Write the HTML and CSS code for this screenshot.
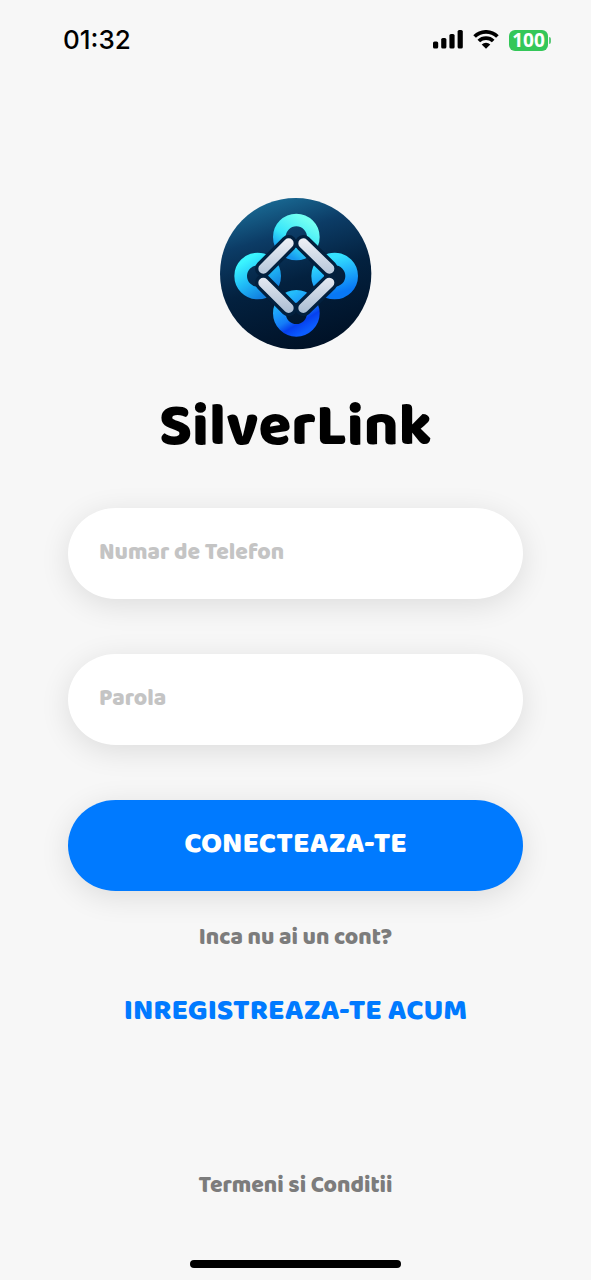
FILE: index.html
```html
<!DOCTYPE html>
<html lang="ro">
<head>
<meta charset="utf-8">
<meta name="viewport" content="width=device-width, initial-scale=1">
<title>SilverLink</title>
<link rel="stylesheet" href="styles.css">
</head>
<body>
<div class="screen">
  <header class="status">
    <time class="clock">01:32</time>
    <div class="indicators">
      <svg class="signal" viewBox="0 0 30 20" aria-hidden="true">
        <rect x="0" y="11.5" width="5.2" height="7" rx="1.6"/>
        <rect x="8.2" y="8" width="5.2" height="10.5" rx="1.6"/>
        <rect x="16.4" y="4" width="5.2" height="14.5" rx="1.6"/>
        <rect x="24.6" y="0" width="5.2" height="18.5" rx="1.6"/>
      </svg>
      <svg class="wifi" viewBox="0 0 26 20" aria-hidden="true">
        <path class="wave" d="M1.6 6.5a16.4 16.4 0 0 1 22.8 0M5.8 11a10.4 10.4 0 0 1 14.4 0"/>
        <path d="M13 18.8l-4.3-4.3a6.2 6.2 0 0 1 8.6 0z"/>
      </svg>
      <div class="battery"><span class="level">100</span><span class="tip"></span></div>
    </div>
  </header>

  <main class="login">
    <svg class="logo" viewBox="14 16 456 456" role="img" aria-label="SilverLink">
      <defs>
        <linearGradient id="disc" x1="0.3" y1="0" x2="0.6" y2="1">
          <stop offset="0" stop-color="#1a6c96"/>
          <stop offset="0.25" stop-color="#0c3c66"/>
          <stop offset="0.55" stop-color="#03213f"/>
          <stop offset="1" stop-color="#001126"/>
        </linearGradient>
        <linearGradient id="top" x1="0.2" y1="1" x2="0.8" y2="0">
          <stop offset="0" stop-color="#1699f0"/>
          <stop offset="0.4" stop-color="#35e4fa"/>
          <stop offset="1" stop-color="#72fff2"/>
        </linearGradient>
        <linearGradient id="left" x1="0.2" y1="0" x2="0.8" y2="1">
          <stop offset="0" stop-color="#3bf5ff"/>
          <stop offset="0.5" stop-color="#20bdf8"/>
          <stop offset="1" stop-color="#1280df"/>
        </linearGradient>
        <linearGradient id="right" x1="0.3" y1="0" x2="0.6" y2="1">
          <stop offset="0" stop-color="#35e2ff"/>
          <stop offset="1" stop-color="#0878f5"/>
        </linearGradient>
        <linearGradient id="bottom" x1="0.2" y1="0" x2="0.8" y2="1">
          <stop offset="0" stop-color="#24bdfb"/>
          <stop offset="0.55" stop-color="#147cf7"/>
          <stop offset="0.75" stop-color="#0640ee"/>
          <stop offset="1" stop-color="#0b5cff"/>
        </linearGradient>
        <linearGradient id="silver" gradientUnits="userSpaceOnUse" x1="0" y1="135" x2="0" y2="362">
          <stop offset="0" stop-color="#f0f2f7"/>
          <stop offset="0.45" stop-color="#b9c9dc"/>
          <stop offset="0.55" stop-color="#e2e7f0"/>
          <stop offset="1" stop-color="#a9bcd2"/>
        </linearGradient>
      </defs>
      <circle cx="241" cy="243" r="227" fill="url(#disc)"/>
      <g class="rings">
        <circle cx="243" cy="133" r="51" stroke="url(#top)"/>
        <circle cx="127" cy="250" r="51" stroke="url(#left)"/>
        <circle cx="358" cy="250" r="51" stroke="url(#right)"/>
        <circle cx="243" cy="362" r="51" stroke="url(#bottom)"/>
      </g>
      <path class="bars-edge" d="M144 228L220 152M264 152L342 228M144 270L220 346M264 346L342 270"/>
      <path class="bars" d="M144 228L220 152M264 152L342 228M144 270L220 346M264 346L342 270"/>
    </svg>
    <h1 class="title">SilverLink</h1>
    <form class="form">
      <input class="field" type="tel" placeholder="Numar de Telefon" aria-label="Numar de Telefon">
      <input class="field" type="password" placeholder="Parola" aria-label="Parola">
      <button class="submit" type="button">CONECTEAZA-TE</button>
    </form>
    <p class="hint">Inca nu ai un cont?</p>
    <a class="register" href="#register">INREGISTREAZA-TE ACUM</a>
  </main>

  <footer class="footer">
    <a class="terms" href="#terms">Termeni si Conditii</a>
    <div class="home-bar"></div>
  </footer>
</div>
</body>
</html>
```
FILE: styles.css
```css
* { box-sizing: border-box; }
body {
  margin: 0;
  background: #f7f7f7;
  color: #000;
  font-family: "Baloo Bhaijaan", "Baloo Bhai", "Baloo", "Baloo 2", Lato, sans-serif;
  font-weight: 800;
}
.screen {
  min-height: 100vh;
  display: flex;
  flex-direction: column;
}
.status {
  display: flex;
  justify-content: space-between;
  align-items: center;
  padding: 24px 40px 0 63px;
  font-family: Inter, sans-serif;
}
.clock { font-size: 26px; line-height: 32px; font-weight: 500; }
.indicators { display: flex; align-items: center; gap: 10px; }
.signal { width: 30px; height: 20px; }
.wifi { width: 26px; height: 20px; }
.wave { fill: none; stroke: #000; stroke-width: 3.8; }
.battery { display: flex; align-items: center; gap: 1px; }
.level {
  width: 39px;
  border-radius: 6px;
  background: #34c759;
  color: #fff;
  font-family: "Open Sans", sans-serif;
  font-size: 19px;
  line-height: 21px;
  font-weight: 700;
  text-align: center;
}
.tip { width: 2px; height: 7px; border-radius: 0 2px 2px 0; background: #5fc97b; }
.login {
  display: flex;
  flex-direction: column;
  align-items: center;
  padding: 142px 68px 0;
}
.logo { width: 152px; height: 152px; }
.rings { fill: none; stroke-width: 38; }
.bars-edge { fill: none; stroke: #02203e; stroke-width: 50; stroke-linecap: round; }
.bars { fill: none; stroke: url(#silver); stroke-width: 30; stroke-linecap: round; }
.title {
  margin: 41px 0 0;
  font-size: 60px;
  line-height: 72px;
  font-weight: 800;
}
.form {
  align-self: stretch;
  display: flex;
  flex-direction: column;
  gap: 55px;
  margin-top: 45px;
}
.field, .submit {
  width: 100%;
  height: 91px;
  border: 0;
  border-radius: 48px / 46px;
  box-shadow: 0 6px 30px rgba(0, 0, 0, 0.11);
  font: inherit;
}
.field { padding: 0 31px 2px; background: #fff; font-size: 23px; }
.field::placeholder { color: #c4c4c4; opacity: 1; }
.submit { padding: 0 0 3px; background: #007aff; color: #fff; font-size: 30px; }
.hint { margin: 32px 0 0; color: #7c7c7c; font-size: 23px; line-height: 30px; }
.register {
  margin-top: 40px;
  color: #007aff;
  font-size: 30px;
  line-height: 36px;
  text-decoration: none;
}
.footer {
  display: flex;
  flex-direction: column;
  align-items: center;
  gap: 59px;
  margin-top: auto;
  padding-bottom: 12px;
}
.terms { color: #7c7c7c; font-size: 23px; line-height: 30px; text-decoration: none; }
.home-bar { width: 211px; height: 8px; border-radius: 4px; background: #000; }
```
